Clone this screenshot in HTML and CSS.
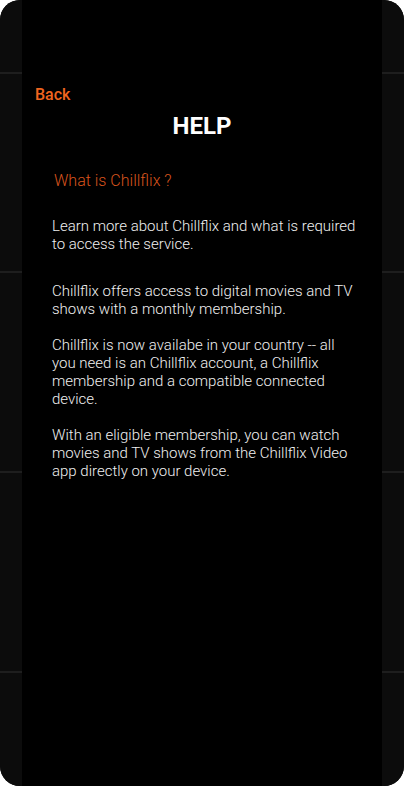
FILE: index.html
```html
<!DOCTYPE html>
<html>
<head>
<meta charset="utf-8">
<link rel="stylesheet" href="styles.css">
</head>
<body>
<div class="phone">
  <div class="side"></div>
  <main class="screen">
    <div class="back">Back</div>
    <h1 class="title">HELP</h1>
    <section class="content">
      <h2 class="question">What is Chillflix ?</h2>
      <p class="intro">Learn more about Chillflix and what is required to access the service.</p>
      <p>Chillflix offers access to digital movies and TV shows with a monthly membership.</p>
      <p>Chillflix is now availabe in your country -- all you need is an Chillflix account, a Chillflix membership and a compatible connected device.</p>
      <p>With an eligible membership, you can watch movies and TV shows from the Chillflix Video app directly on your device.</p>
    </section>
  </main>
  <div class="side"></div>
</div>
</body>
</html>
```
FILE: styles.css
```css
html, body {
  margin: 0;
  padding: 0;
  background: #ffffff;
}
.phone {
  width: 404px;
  height: 786px;
  border-radius: 20px;
  overflow: hidden;
  display: flex;
  background: #0c0c0c;
  font-family: Roboto, "Noto Sans", sans-serif;
}
.side {
  width: 22px;
  flex: none;
  background:
    linear-gradient(#1e1e1e, #1e1e1e) 0 72px / 100% 2px no-repeat,
    linear-gradient(#1e1e1e, #1e1e1e) 0 271px / 100% 2px no-repeat,
    linear-gradient(#1e1e1e, #1e1e1e) 0 471px / 100% 2px no-repeat,
    linear-gradient(#1e1e1e, #1e1e1e) 0 671px / 100% 2px no-repeat,
    #0c0c0c;
}
.screen {
  flex: 1;
  background: #000;
  padding: 85px 26px 0 30px;
  display: flex;
  flex-direction: column;
}
.back {
  color: #f0651f;
  font-size: 16px;
  font-weight: 500;
  margin-left: -17px;
  line-height: 20px;
}
.title {
  margin: 7px 0 0 -4px;
  text-align: center;
  color: #fff;
  font-size: 24px;
  font-weight: 700;
  line-height: 28px;
}
.content {
  margin-top: 31px;
}
.question {
  margin: 0 0 0 2px;
  color: #d9541d;
  font-size: 16px;
  font-weight: 300;
  line-height: 20px;
}
.content p {
  margin: 18px 0 0 0;
  color: #f0f0f0;
  font-size: 15px;
  font-weight: 300;
  line-height: 18px;
}
.content p.intro {
  margin-top: 26px;
  margin-bottom: 29px;
}
```
